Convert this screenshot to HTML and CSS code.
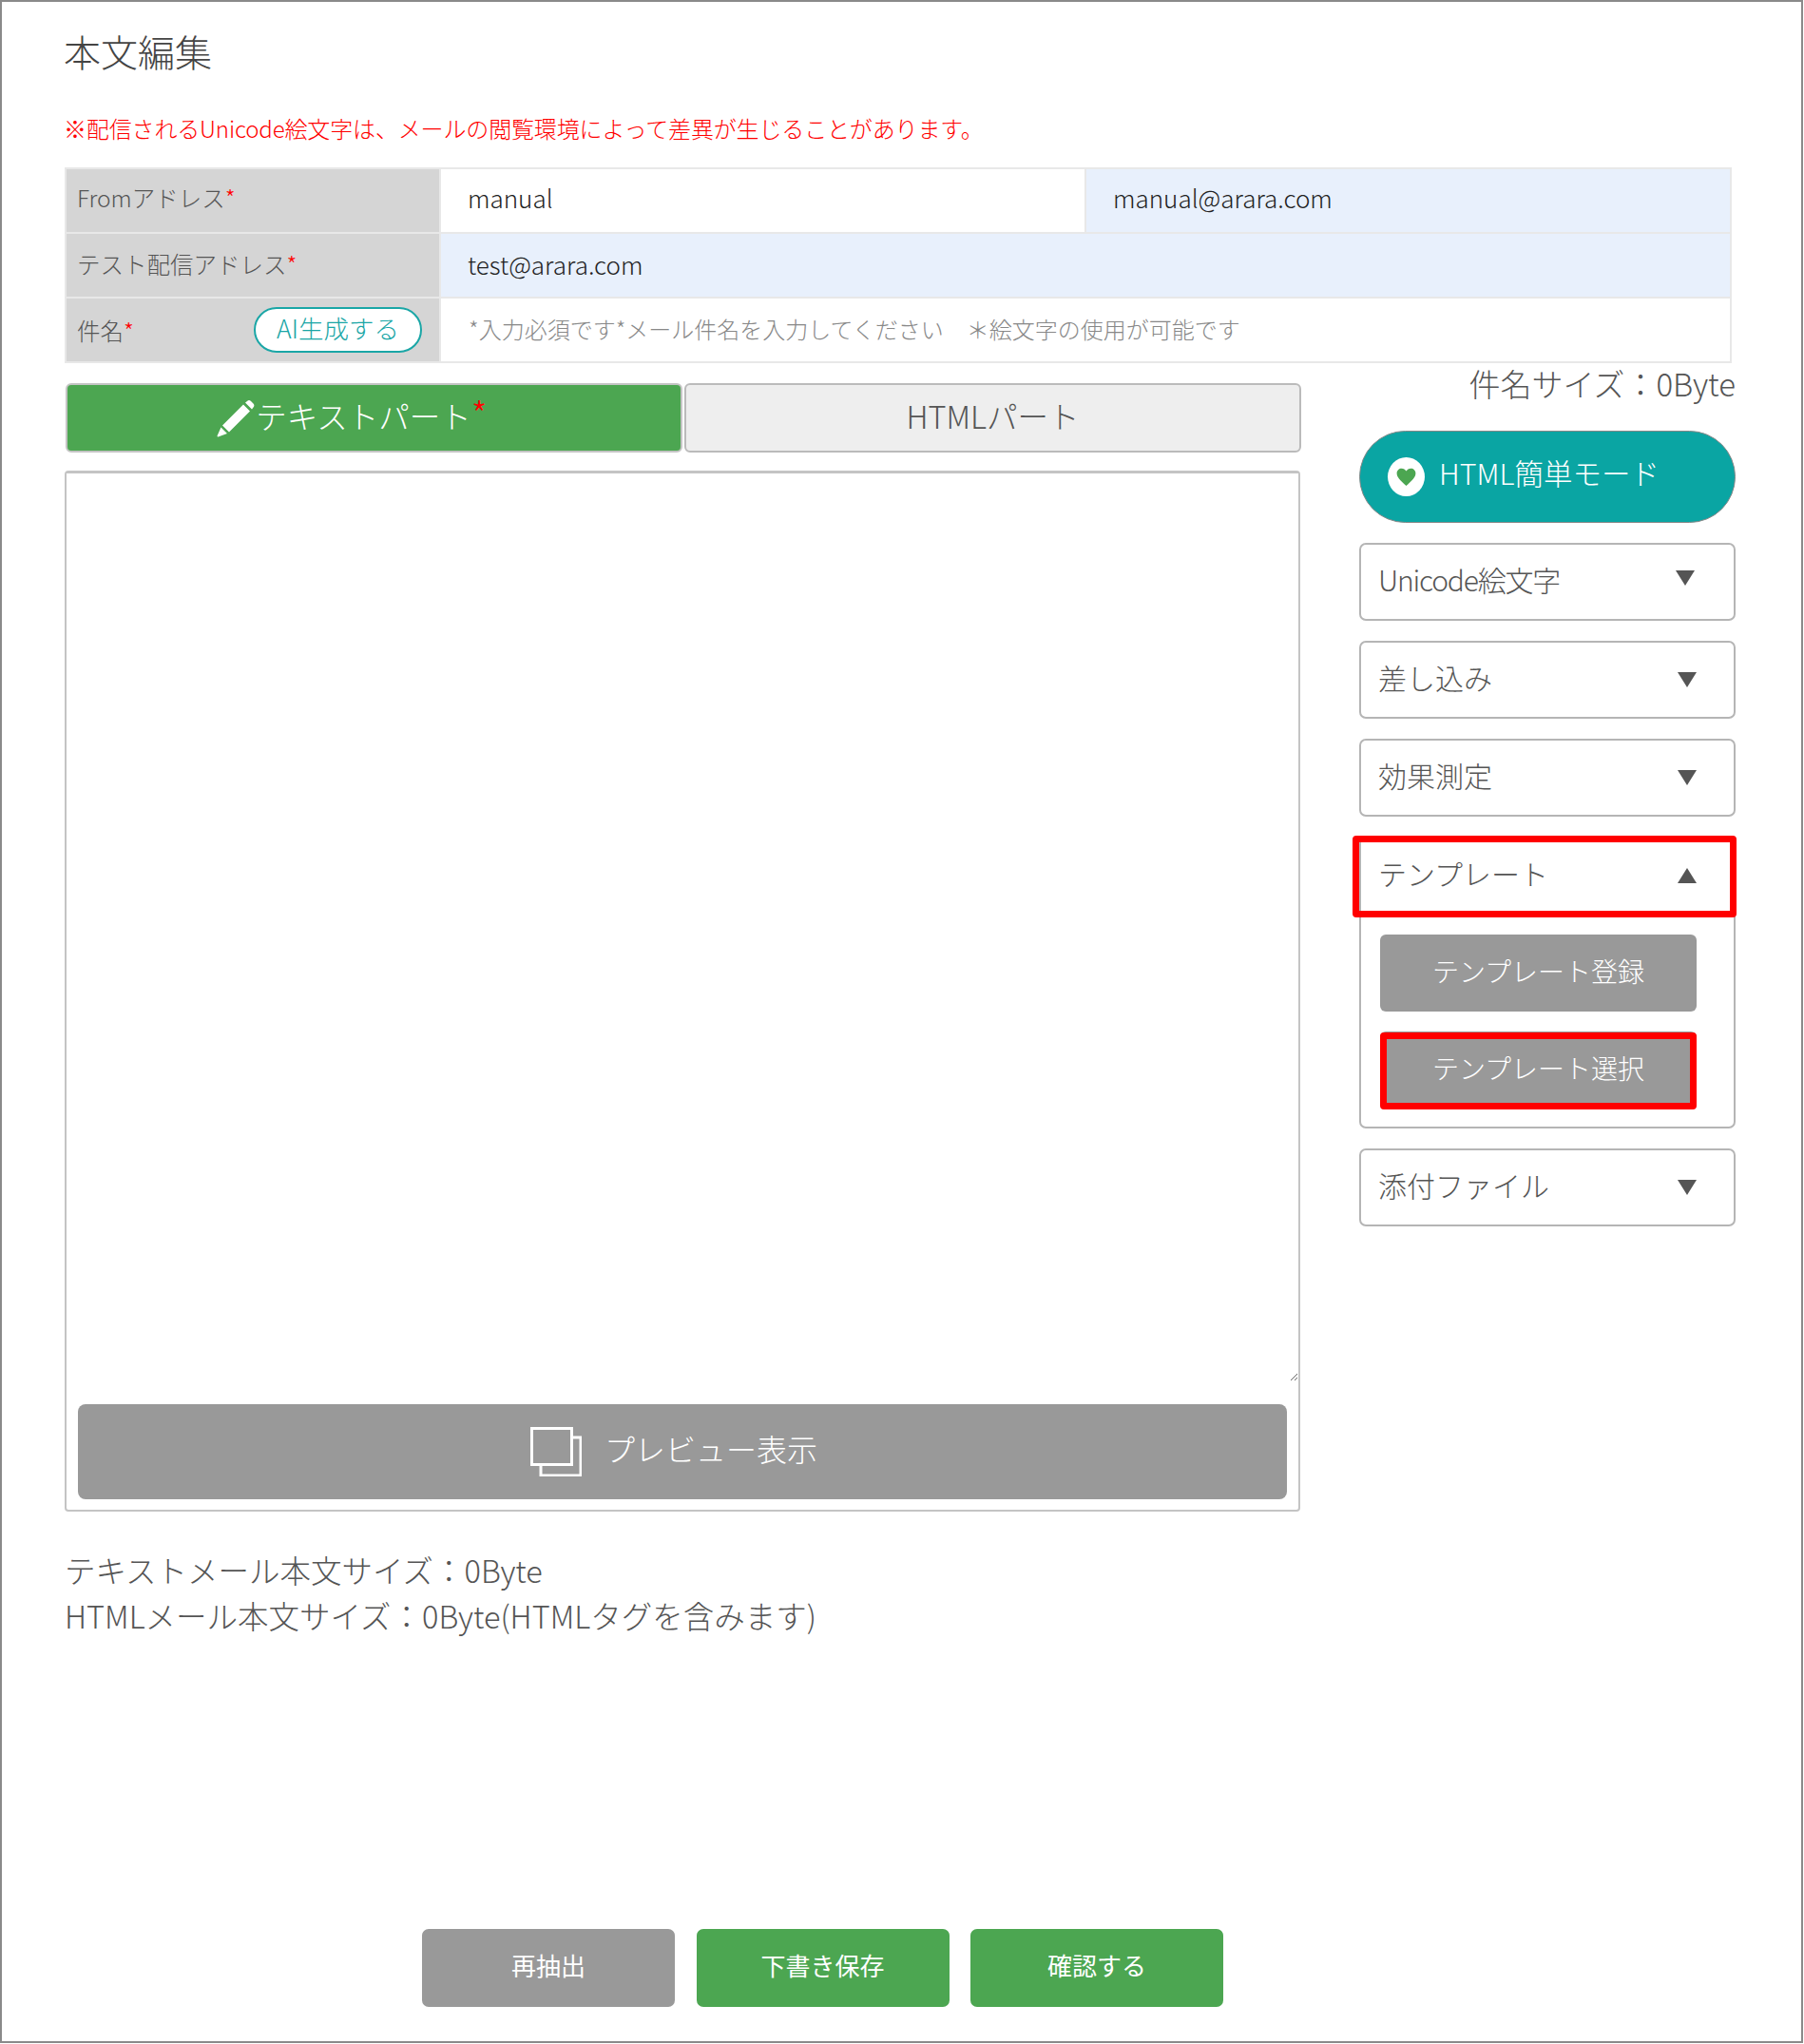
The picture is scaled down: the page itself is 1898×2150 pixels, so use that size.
FILE: index.html
```html
<!DOCTYPE html>
<html lang="ja">
<head>
<meta charset="utf-8">
<title>本文編集</title>
<link rel="stylesheet" href="styles.css">
</head>
<body>
<div class="frame">
  <h1 class="title">本文編集</h1>
  <p class="notice">※配信されるUnicode絵文字は、メールの閲覧環境によって差異が生じることがあります。</p>
  <table class="info">
    <tr class="first">
      <th>Fromアドレス<span class="req">*</span></th>
      <td class="val">manual</td>
      <td class="val blue">manual@arara.com</td>
    </tr>
    <tr>
      <th>テスト配信アドレス<span class="req">*</span></th>
      <td class="val blue" colspan="2">test@arara.com</td>
    </tr>
    <tr>
      <th><div class="subject-head"><span>件名<span class="req">*</span></span><span class="ai">AI生成する</span></div></th>
      <td class="val hint" colspan="2">*入力必須です*メール件名を入力してください　＊絵文字の使用が可能です</td>
    </tr>
  </table>
  <div class="main">
    <div class="left">
      <div class="tabs">
        <div class="tab on">
          <svg class="pencil" viewBox="0 0 40 40"><path d="M6 27 28 5l7 7-22 22z M30 3l2-1.500a3 3 0 0 1 4 0L38.500 4a3 3 0 0 1 0 4L37 10z M4.500 29 11 35.500 1.500 39a1 1 0 0 1-1-1z" fill="#fff"/></svg>
          <span>テキストパート<span class="req big">*</span></span>
        </div>
        <div class="tab off">HTMLパート</div>
      </div>
      <div class="editor">
        <textarea class="body-input" aria-label="本文"></textarea>
        <div class="preview">
          <svg class="copy" viewBox="0 0 54 52"><rect x="11" y="11" width="42" height="40" fill="none" stroke="#fff" stroke-width="3"/><rect x="1.500" y="1.500" width="42" height="38" fill="#999" stroke="#fff" stroke-width="3"/></svg>
          <span>プレビュー表示</span>
        </div>
      </div>
      <div class="sizes">
        <div>テキストメール本文サイズ：0Byte</div>
        <div>HTMLメール本文サイズ：0Byte(HTMLタグを含みます)</div>
      </div>
    </div>
    <div class="right">
      <div class="subject-size">件名サイズ：0Byte</div>
      <div class="pill">
        <span class="dot"><svg viewBox="0 0 24 24"><path d="M12 21C6 16 2.500 12.500 2.500 8.500 2.500 5.500 4.800 3.500 7.300 3.500c2 0 3.700 1 4.700 2.800 1-1.800 2.700-2.800 4.700-2.800 2.500 0 4.800 2 4.800 5 0 4-3.500 7.500-9.500 12.500z" fill="#4ca651"/></svg></span>
        <span>HTML簡単モード</span>
      </div>
      <div class="acc"><div class="acc-head"><span class="latin-label">Unicode絵文字</span><i class="tri raised"></i></div></div>
      <div class="acc"><div class="acc-head"><span>差し込み</span><i class="tri"></i></div></div>
      <div class="acc"><div class="acc-head"><span>効果測定</span><i class="tri"></i></div></div>
      <div class="acc open">
        <div class="acc-head"><span>テンプレート</span><i class="tri up"></i><b class="mark mark-head"></b></div>
        <div class="acc-body">
          <div class="tpl">テンプレート登録</div>
          <div class="tpl sel">テンプレート選択<b class="mark mark-btn"></b></div>
        </div>
      </div>
      <div class="acc"><div class="acc-head"><span>添付ファイル</span><i class="tri"></i></div></div>
    </div>
  </div>
  <div class="actions">
    <div class="act gray">再抽出</div>
    <div class="act green">下書き保存</div>
    <div class="act green">確認する</div>
  </div>
</div>
</body>
</html>
```
FILE: styles.css
```css
* { box-sizing: border-box; }
html, body { margin: 0; padding: 0; background: #fff; }
body {
  font-family: "Noto Sans CJK JP", "Noto Sans", sans-serif;
  font-weight: 300;
  color: #555;
}
.frame {
  width: 1897px;
  height: 2149px;
  border: 2px solid #8a8a8a;
  padding: 0 0 0 66px;
  position: relative;
}
.title {
  margin: 0 0 0 -1px;
  padding-top: 24px;
  height: 105px;
  font-size: 39px;
  line-height: 54px;
  font-weight: 300;
  color: #444;
}
.notice {
  margin: 0 0 0 -1px;
  height: 69px;
  font-size: 24px;
  line-height: 55px;
  color: #f00;
  letter-spacing: -.15px;
  white-space: nowrap;
}
.info {
  width: 1754px;
  table-layout: fixed;
  border-collapse: collapse;
  font-size: 24.5px;
}
.info tr { height: 68px; }
.info th, .info td {
  border: 2px solid #e8e8e8;
  padding: 0 0 4px;
  text-align: left;
  font-weight: 300;
}
.info .first th, .info .first td { padding-bottom: 7px; }
.info th {
  width: 394px;
  padding-left: 11px;
  padding-right: 18px;
  background: #d5d5d5;
  color: #555;
}
.val { padding-left: 28px !important; color: #222; font-size: 26px; }
.blue { background: #e8f0fc; }
.hint { padding-left: 29px !important; color: #888; font-size: 24px; }
.req { color: #f00; }
.subject-head { display: flex; justify-content: space-between; align-items: center; padding-top: 4px; }
.ai {
  width: 177px;
  height: 48px;
  border: 2px solid #1aa6a6;
  border-radius: 24px;
  background: #fff;
  color: #1aa6a6;
  font-size: 26.500px;
  line-height: 40px;
  text-align: center;
}
.main { display: flex; align-items: flex-start; margin-top: 1px; }
.left { width: 1300px; }
.tabs { display: flex; gap: 2px; margin-top: 20px; padding-left: 1px; }
.tab {
  flex: 0 0 649px;
  height: 73px;
  border-radius: 6px;
  display: flex;
  align-items: center;
  justify-content: center;
  font-size: 32.5px;
  padding-bottom: 6px;
}
.tab.on { background: #4ca651; color: #fff; border: 2px solid #c4c4c4; gap: 1px; padding-right: 46px; }
.tab.off { background: #eee; color: #555; border: 2px solid #bbb; }
.req.big { font-size: 38px; line-height: 1; }
.pencil { width: 40px; height: 41px; margin-top: 7px; }
.editor {
  margin-top: 19px;
  height: 1095px;
  border: 2px solid #c4c4c4;
  border-top-width: 3px;
  border-radius: 4px;
  padding: 0 12px 0 12px;
  display: flex;
  flex-direction: column;
}
.body-input {
  display: block;
  width: calc(100% + 24px);
  margin: 0 -12px;
  height: 955px;
  border: 0;
  outline: 0;
  background: #fff;
}
.preview {
  margin-top: 24px;
  height: 100px;
  border-radius: 8px;
  background: #999;
  color: #fff;
  font-size: 32px;
  display: flex;
  align-items: center;
  justify-content: center;
  gap: 24px;
  padding-right: 18px;
}
.preview span { margin-top: -8px; }
.copy { width: 54px; height: 52px; }
.sizes { margin-top: 36px; font-size: 32.5px; line-height: 48px; color: #555; padding-top: 1px; }
.right { width: 396px; margin-left: 62px; }
.subject-size { height: 70px; font-size: 33px; line-height: 40px; text-align: right; color: #555; white-space: nowrap; }
.pill {
  height: 97px;
  border-radius: 49px;
  background: #0aa5a3;
  border: 1px solid #888;
  color: #fff;
  font-size: 30.5px;
  display: flex;
  align-items: center;
  padding-left: 29px;
  gap: 15px;
}
.pill > span:last-child { margin-top: -9px; }
.dot {
  width: 39px;
  height: 41px;
  border-radius: 50%;
  background: #fff;
  display: flex;
  align-items: center;
  justify-content: center;
}
.dot svg { width: 25px; height: 25px; }
.acc {
  margin-top: 21px;
  border: 2px solid #b5b5b5;
  border-radius: 7px;
  background: #fff;
}
.acc-head {
  height: 78px;
  position: relative;
  display: flex;
  align-items: center;
  justify-content: space-between;
  padding: 0 39px 6px 18px;
  font-size: 30px;
  color: #555;
}
.latin-label { letter-spacing: -1.200px; }
.tri {
  display: block;
  width: 0;
  height: 0;
  border-left: 10px solid transparent;
  border-right: 10px solid transparent;
  border-top: 16px solid #555;
  margin-top: 6px;
}
.tri.raised { margin-top: -2px; margin-right: 2px; }
.tri.up { border-top: 0; border-bottom: 16px solid #555; }
.acc-body { padding: 23px 39px 19px 20px; display: flex; flex-direction: column; gap: 21px; }
.tpl {
  position: relative;
  height: 81px;
  border-radius: 6px;
  background: #999;
  color: #fff;
  font-size: 28px;
  line-height: 76px;
  text-align: center;
  white-space: nowrap;
}
.mark { position: absolute; display: block; border: 7px solid #f00; border-radius: 4px; pointer-events: none; }
.mark-head { left: -9px; right: -3px; top: -3px; bottom: -5px; }
.mark-btn { left: 0; right: 0; top: 1px; bottom: -1px; }
.actions { display: flex; gap: 22.5px; position: absolute; top: 2027px; left: 442px; }
.act {
  width: 266px;
  height: 82px;
  border-radius: 7px;
  color: #fff;
  font-size: 26px;
  font-weight: 400;
  line-height: 76px;
  text-align: center;
}
.gray { background: #999; }
.green { background: #4ca651; }
```
